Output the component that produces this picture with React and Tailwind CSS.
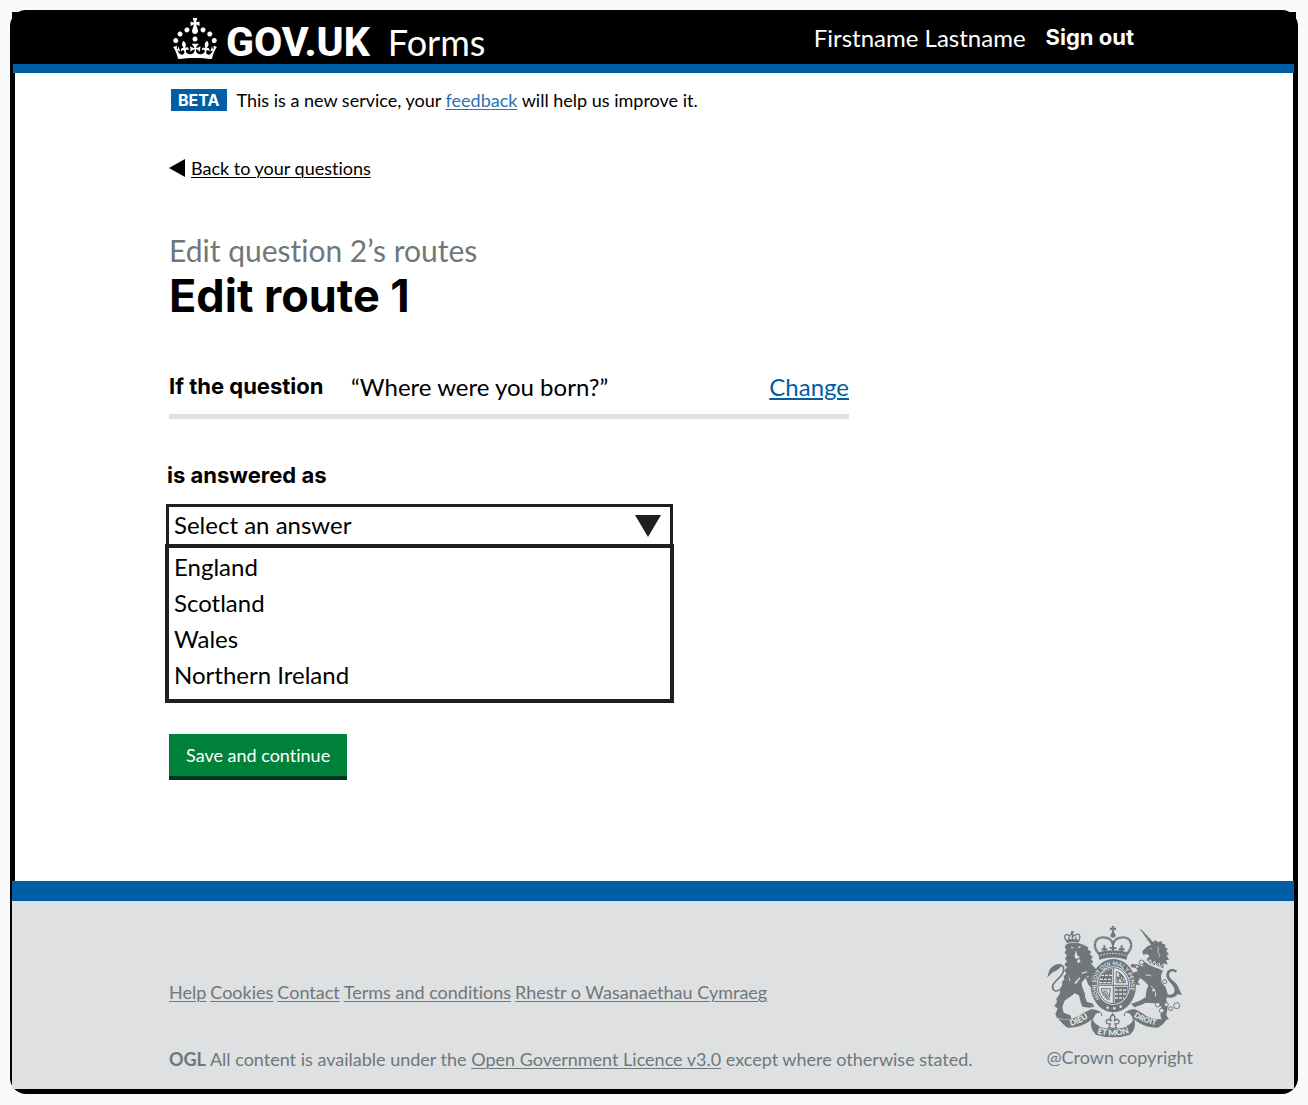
const options = ["England", "Scotland", "Wales", "Northern Ireland"];
const footerLinks = ["Help", "Cookies", "Contact", "Terms and conditions", "Rhestr o Wasanaethau Cymraeg"];

function Crown() {
  return (
    <svg viewBox="0 0 32 30" className="h-[41px] w-[44px] shrink-0" fill="currentColor" aria-hidden="true">
      <path d="M22.6 10.4c-1 .4-2-.1-2.4-1-.4-.9.1-2 1-2.4.9-.4 2 .1 2.4 1s-.1 2-1 2.4m-5.9 6.7c-.9.4-2-.1-2.4-1-.4-.9.1-2 1-2.4.9-.4 2 .1 2.4 1s-.1 2-1 2.4m10.8-3.7c-1 .4-2-.1-2.4-1-.4-.9.1-2 1-2.4.9-.4 2 .1 2.4 1s0 2-1 2.4m3.3 4.8c-1 .4-2-.1-2.4-1-.4-.9.1-2 1-2.4.9-.4 2 .1 2.4 1s-.1 2-1 2.4M17 4.7l2.3 1.2V2.5l-2.3.7-.2-.2.9-3h-3.4l.9 3-.2.2c-.1.1-2.3-.7-2.3-.7v3.4L15 4.7c.1.1.1.2.2.2l-1.3 4c-.1.2-.1.4-.1.6 0 1.1.8 2 1.9 2.2h.7c1-.2 1.9-1.1 1.9-2.1 0-.2 0-.4-.1-.6l-1.3-4c-.1-.2 0-.2.1-.3m-7.6 5.7c.9.4 2-.1 2.4-1 .4-.9-.1-2-1-2.4-.9-.4-2 .1-2.4 1s0 2 1 2.4m-5 3c.9.4 2-.1 2.4-1 .4-.9-.1-2-1-2.4-.9-.4-2 .1-2.4 1s.1 2 1 2.4m-3.2 4.8c.9.4 2-.1 2.4-1 .4-.9-.1-2-1-2.4-.9-.4-2 .1-2.4 1s0 2 1 2.4m14.8 11c4.4 0 8.6.3 12.3.8 1.1-4.5 2.4-7 3.7-8.8l-2.5-.9c.2 1.3.3 1.9 0 2.7-.4-.4-.8-1.1-1.1-2.3l-1.2 4c.7-.5 1.3-.8 2-.9-1.1 2.5-2.6 3.1-3.5 3-1.1-.2-1.7-1.2-1.5-2.1.3-1.2 1.5-1.5 2.1-.1 1.1-2.3-.8-3-2-2.3 1.9-1.9 2.1-3.5.6-5.6-2.1 1.6-2.1 3.2-1.2 5.5-1.2-1.4-3.2-.6-2.5 1.6.9-1.4 2.1-.5 1.9.8-.2 1.1-1.7 2.1-3.5 1.9-2.7-.2-2.9-2.1-2.9-3.6.7-.1 1.9.5 2.9 1.9l.4-4.3c-1.1 1.1-2.1 1.4-3.2 1.4.4-1.2 2.1-3 2.1-3h-5.4s1.7 1.9 2.1 3c-1.1 0-2.1-.2-3.2-1.4l.4 4.3c1-1.4 2.2-2 2.9-1.9-.1 1.5-.2 3.4-2.9 3.6-1.9.2-3.4-.8-3.5-1.9-.2-1.3 1-2.2 1.9-.8.7-2.3-1.2-3-2.5-1.6.9-2.2.9-3.9-1.2-5.5-1.5 2-1.3 3.7.6 5.6-1.2-.7-3.1 0-2 2.3.6-1.4 1.8-1.1 2.1.1.2.9-.3 1.9-1.5 2.1-.9.2-2.4-.5-3.5-3 .6 0 1.2.3 2 .9l-1.2-4c-.3 1.1-.7 1.9-1.1 2.3-.3-.8-.2-1.4 0-2.7l-2.9.9C1.3 23 2.6 25.5 3.7 30c3.7-.5 7.9-.8 12.3-.8" />
    </svg>
  );
}

function CoatOfArms() {
  const ink = "#6f777b";
  const paper = "#dee0e2";
  return (
    <svg viewBox="54 36 405 336" className="h-[112px] w-[135px]" role="img" aria-label="Royal coat of arms">
      <defs>
        <path id="garter" d="M213 254 A52 61 0 1 1 293 254" />
        <path id="dieu" d="M125 336 Q160 328 194 298" />
        <path id="etmon" d="M204 358 Q252 373 304 356" />
        <path id="droit" d="M314 307 Q342 328 390 335" />
      </defs>

      {/* Lion */}
      <g fill={ink}>
        <path d="M111 92 C122 84 152 84 166 94 L178 100 L176 106 L187 114 L182 120 L192 130 L186 135 L193 144 L186 149 L196 160 L206 170 L204 182 L190 178 L199 190 L186 190 L176 186 C170 194 158 200 158 210 C160 226 170 236 168 248 L174 264 L190 268 L196 278 L180 281 L160 278 L154 262 L150 244 L136 238 C126 250 112 254 106 262 L100 280 L104 296 L124 304 L128 314 L104 316 L84 312 L79 300 L86 284 L76 276 L84 264 L82 254 L92 240 L94 222 L100 212 L99 204 L106 196 L104 188 L112 178 L106 170 L114 160 L106 152 L114 142 L108 134 L114 124 L107 116 L112 106 L107 100 Z" />
        <path d="M186 186 L190 210 L200 220 L190 224 L178 212 L170 192 Z" />
        <path d="M54 190 C60 178 58 166 70 158 C78 152 88 146 98 154 C92 166 80 172 72 174 C66 178 62 186 54 190 Z" />
      </g>
      <path d="M90 152 C112 156 106 176 90 192 C72 208 66 218 74 228 C80 234 88 230 94 226" fill="none" stroke={ink} strokeWidth="5" />
      <g fill={paper}>
        <path d="M126 98 l9 3 -7 3z M146 99 l10 -4 -4 8z M141 108 l4 16 8 6 -10 5 -7 -6z M144 140 l6 -6 5 8 -8 6z" />
        <path d="M118 182 l6 18 -3 1z M136 206 l16 -16 2 3 -14 18z M158 176 l16 -4 1 3 -16 5z" />
      </g>
      <g fill="none" stroke={ink} strokeWidth="4">
        <path d="M113 82 C100 64 112 56 122 66 L128 58 L134 66 C150 54 158 64 148 82" />
        <path d="M112 80 Q130 74 149 80 M130 52 V78 M120 68 V78 M141 68 V78 M126 54 H135" />
      </g>
      <path d="M112 80 Q130 73 150 80 L148 87 Q130 80 114 88 Z" fill={ink} />

      {/* Unicorn */}
      <path d="M332 44 L338 47 L376 88 L368 95 Z" fill={ink} />
      <path d="M340 54 l8 -4 M347 63 l8 -4 M354 72 l8 -4 M361 81 l8 -4" stroke={paper} strokeWidth="1" />
      <g fill={ink}>
        <path d="M368 92 L378 78 L386 84 L400 82 L398 88 L410 92 L407 98 L417 106 L411 110 L420 121 L413 124 L420 138 L411 138 L416 152 L404 148 L403 164 L388 156 L366 150 L350 138 L362 126 L354 120 L342 122 L340 112 L356 96 Z" />
        <path d="M346 142 C362 156 382 160 402 170 L396 184 L398 206 L410 220 L416 240 L412 256 L416 280 L412 304 L420 316 L398 318 L394 304 L400 284 L388 266 L376 268 L350 266 L338 272 L316 280 L306 270 L332 260 L350 250 L352 230 L358 214 L346 202 L334 192 L326 204 L334 212 L322 212 L314 194 L310 176 L326 172 L322 162 L306 160 L306 150 L330 152 L340 158 Z" />
        <path d="M412 240 C424 246 440 240 436 224 C430 206 410 200 412 180 C414 162 434 162 444 170 L440 176 C432 168 422 172 420 182 C420 196 444 204 448 220 L459 244 L446 240 C438 254 420 252 412 248 Z" />
      </g>
      <g fill="none" stroke={paper} strokeWidth="3">
        <path d="M345 140 Q370 160 402 164" />
        <path d="M352 134 l5 12 7 -9 5 14 8 -10 4 15 9 -9 4 14 8 -10" />
        <path d="M366 216 C376 224 384 236 378 248 M366 186 Q356 180 350 184" />
        <path d="M386 98 Q392 106 386 114 Q396 120 390 130" strokeWidth="2" />
      </g>
      <circle cx="366" cy="104" r="2" fill={paper} />
      <g fill={paper} stroke={ink} strokeWidth="3">
        <circle cx="338" cy="145" r="7" />
        <circle cx="324" cy="158" r="5" />
        <circle cx="407" cy="203" r="6" />
        <circle cx="374" cy="228" r="6" />
        <circle cx="386" cy="272" r="7" />
        <circle cx="398" cy="290" r="7" />
        <circle cx="412" cy="272" r="6" />
        <circle cx="425" cy="284" r="6" />
        <circle cx="443" cy="275" r="9" />
      </g>

      {/* Royal crown */}
      <g fill="none" stroke={ink}>
        <path d="M212 122 C188 98 196 70 222 70 C242 70 250 82 252 92 C254 82 262 70 282 70 C308 70 316 98 292 122" strokeWidth="7" />
        <path d="M212 122 C188 98 196 70 222 70 C242 70 250 82 252 92 C254 82 262 70 282 70 C308 70 316 98 292 122" stroke={paper} strokeWidth="2" strokeDasharray="2 4" />
        <path d="M252 82 V114 M242 102 H262 M226 94 V116 M278 94 V116 M217 106 H235 M269 106 H287" strokeWidth="6" />
      </g>
      <g fill={ink}>
        <path d="M248 36 h8 l-2 7 7 -3 v9 l-7 -2 2 10 q5 4 4 10 q-8 8 -16 0 q-1 -6 4 -10 l2 -10 -7 2 v-9 l7 3z" />
        <path d="M208 115 Q252 103 296 115 L293 137 Q252 124 211 137 Z" />
      </g>
      <path d="M214 124 Q252 112 290 124" stroke={paper} strokeWidth="3" strokeDasharray="5 4" fill="none" />

      {/* Garter and shield */}
      <ellipse cx="253" cy="215" rx="68" ry="80" fill={ink} />
      <ellipse cx="253" cy="215" rx="50" ry="58" fill={paper} />
      <ellipse cx="253" cy="215" rx="46" ry="54" fill="none" stroke={ink} strokeWidth="3" />
      <text fill={paper} fontSize="17" fontWeight="700" fontFamily="Lato, sans-serif">
        <textPath href="#garter">HONI SOIT QUI MAL Y PENSE</textPath>
      </text>
      <g fill={ink}>
        <path d="M217 182 Q232 166 249 164 V211 H210 Q211 194 217 182 Z" />
        <path d="M257 218 H296 Q294 248 282 257 Q272 266 257 267 Z" />
      </g>
      <path d="M216 184 h33 M213 196 h36 M211 206 h38 M258 228 h36 M258 240 h34 M258 252 h27" stroke={paper} strokeWidth="4" strokeDasharray="9 3" />
      <path d="M253 162 V268 M208 214 H298" stroke={ink} strokeWidth="3" />
      <g fill="none" stroke={ink} strokeWidth="3">
        <path d="M262 172 Q284 178 290 206 H261 Z" />
        <path d="M268 204 L266 190 L274 194 L272 180 L282 190 L278 198 L286 204" strokeWidth="5" />
        <path d="M217 224 Q220 250 240 258 L244 224 Z M224 228 L238 254 M231 228 L240 248 M221 232 L234 252" />
      </g>
      <g fill={paper}>
        <circle cx="236" cy="281" r="4" />
        <circle cx="256" cy="283" r="4" />
        <circle cx="275" cy="278" r="4" />
      </g>

      {/* Motto scroll */}
      <g fill={ink}>
        <path d="M88 314 Q120 322 150 306 Q170 292 186 286 Q202 284 214 294 L200 300 Q196 312 178 324 Q152 342 116 341 Q104 334 88 314 Z" />
        <path d="M414 314 Q380 320 352 306 Q332 292 318 286 Q302 284 290 294 L304 300 Q308 312 326 324 Q352 342 386 341 Q402 334 414 314 Z" />
        <path d="M198 336 Q252 352 306 336 L304 362 Q252 378 200 362 Z" />
        <path d="M188 310 Q194 330 212 336 L202 362 Q186 350 186 330 Z M316 310 Q310 330 292 336 L302 362 Q318 350 318 330 Z" />
      </g>
      <path d="M251 300 Q262 310 255 322 Q262 312 270 320 Q272 330 258 330 L262 340 Q251 346 240 340 L244 330 Q230 330 232 320 Q240 312 247 322 Q240 310 251 300 Z" fill="none" stroke={ink} strokeWidth="4" />
      <path d="M192 316 Q190 300 204 294 Q220 292 218 306 M312 316 Q314 300 300 294 Q284 292 286 306" fill="none" stroke={ink} strokeWidth="3" />
      <g fill={paper} fontWeight="800" fontFamily="Lato, sans-serif">
        <text fontSize="25"><textPath href="#dieu">DIEU</textPath></text>
        <text fontSize="25"><textPath href="#etmon">ET MON</textPath></text>
        <text fontSize="23"><textPath href="#droit">DROIT</textPath></text>
      </g>
    </svg>
  );
}

export default function App() {
  return (
    <div className="min-h-screen bg-[#fafafa] p-[10px] font-['Lato',sans-serif] text-black [font-variant-ligatures:none]">
      <div className="rounded-2xl bg-black p-[2px] pb-[5px]">
        <header className="flex h-[52px] items-center justify-between bg-black pr-[162px] pl-[161px] text-white">
          <a href="#home" className="flex items-center">
            <Crown />
            <span className="ml-[9px] pt-2 font-['Roboto',sans-serif] text-[41px] leading-[44px] font-extrabold">GOV.UK</span>
            <span className="ml-[18px] pt-2 text-[36px] leading-[44px]">Forms</span>
          </a>
          <nav className="flex items-center gap-5 text-2xl">
            <span>Firstname Lastname</span>
            <a href="#sign-out" className="font-['Inter',sans-serif] text-[22px] font-bold">Sign out</a>
          </nav>
        </header>
        <div className="mr-[2px] ml-px h-[9px] bg-[#005ea5]" />

        <main className="mx-[3px] bg-white px-[154px] pt-4 pb-[101px]">
          <p className="flex items-center gap-[10px] px-0.5 text-lg leading-[22px]">
            <strong className="bg-[#005ea5] px-[7px] font-['Inter',sans-serif] text-base leading-[22px] text-white">BETA</strong>
            <span>
              This is a new service, your{" "}
              <a href="#feedback" className="text-[#2b72b8] underline decoration-1 underline-offset-2">feedback</a> will help us improve it.
            </span>
          </p>

          <a href="#questions" className="mt-[45px] flex w-fit items-center gap-[6px] text-lg leading-6">
            <svg viewBox="0 0 16 18" className="h-[18px] w-4" aria-hidden="true">
              <path d="M16 0v18L0 9z" />
            </svg>
            <span className="underline decoration-1 underline-offset-2">Back to your questions</span>
          </a>

          <h1 className="mt-[52px]">
            <span className="block text-[30px] leading-9 text-[#6f777b]">Edit question 2’s routes</span>
            <span className="block font-['Inter',sans-serif] text-[45px] leading-[56px] font-bold">Edit route 1</span>
          </h1>

          <dl className="mt-[47px] flex max-w-[680px] items-center border-b-[5px] border-[#dee0e2] pb-[11px] text-2xl">
            <dt className="w-[182px] font-['Inter',sans-serif] text-[22px] font-bold">If the question</dt>
            <dd>“Where were you born?”</dd>
            <dd className="ml-auto">
              <a href="#change" className="text-[#005ea5] underline decoration-2 underline-offset-2">Change</a>
            </dd>
          </dl>

          <form className="-mx-1 mt-10" onSubmit={(e) => e.preventDefault()}>
            <label htmlFor="answer" className="block px-0.5 font-['Inter',sans-serif] text-[22px] leading-8 font-bold">is answered as</label>
            <div className="mt-[13px] max-w-[509px]">
              <div className="relative mx-px">
                <select id="answer" className="block h-[43px] w-full appearance-none border-[3px] border-[#1f1f1f] bg-white px-[5px] pb-0.5 text-2xl leading-8">
                  <option>Select an answer</option>
                </select>
                <svg viewBox="0 0 26 22" className="pointer-events-none absolute top-[11px] right-3 h-[22px] w-[26px]" fill="#1f1f1f" aria-hidden="true">
                  <path d="M0 0h26L13 22z" />
                </svg>
              </div>
              <ul role="listbox" aria-label="Answers" className="relative -mt-[3px] border-4 border-[#1f1f1f] bg-white px-[5px] pt-px pb-[6px] text-2xl leading-9">
                {options.map((o) => (
                  <li key={o} role="option" aria-selected="false">{o}</li>
                ))}
              </ul>
            </div>
            <button type="submit" className="mt-[31px] ml-1 h-[46px] border-b-4 border-[#003618] bg-[#00823b] px-[17px] text-lg text-white">
              Save and continue
            </button>
          </form>
        </main>

        <footer className="mr-[2px] border-t-[20px] border-[#005ea5] bg-[#dee0e2] text-lg leading-6 text-[#6f777b]">
          <div className="flex justify-between gap-4 pr-[101px] pb-[18px] pl-[157px]">
            <div className="pt-[79px]">
              <nav className="flex flex-wrap gap-x-1">
                {footerLinks.map((l) => (
                  <a key={l} href="#footer" className="underline decoration-1 underline-offset-2">{l}</a>
                ))}
              </nav>
              <p className="mt-[43px]">
                <strong>OGL</strong> All content is available under the{" "}
                <a href="#licence" className="underline decoration-1 underline-offset-2">Open Government Licence v3.0</a> except where otherwise stated.
              </p>
            </div>
            <div className="shrink-0 pt-[25px]">
              <CoatOfArms />
              <p className="mt-[7px]">@Crown copyright</p>
            </div>
          </div>
        </footer>
      </div>
    </div>
  );
}
